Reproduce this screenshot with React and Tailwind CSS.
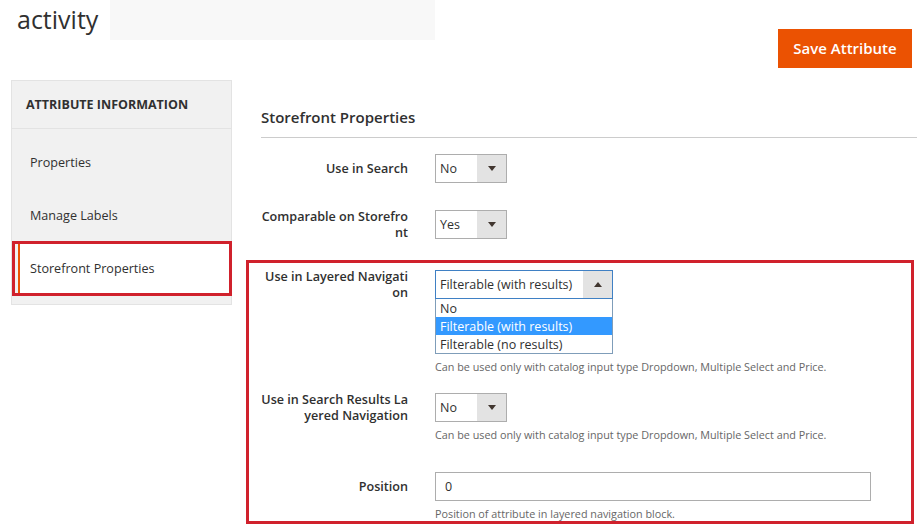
import React from "react";

function Arrow({ up }) {
  return (
    <svg width="8" height="5" viewBox="0 0 8 5">
      {up ? <path d="M0 5h8L4 0z" fill="#41362f" /> : <path d="M0 0h8L4 5z" fill="#41362f" />}
    </svg>
  );
}

function Select({ value, w, open }) {
  return (
    <div
      className={
        "flex h-[29px] border " +
        (open ? "border-[#3f80c4]" : "border-[#adadad]")
      }
      style={{ width: w }}
    >
      <div className="flex-1 flex items-center pl-[4px] pt-[1px] text-[12.5px] text-[#303030] bg-white">{value}</div>
      <div className="w-[29px] bg-[#e3e3e3] flex items-center justify-center">
        <Arrow up={open} />
      </div>
    </div>
  );
}

function Label({ children, w }) {
  return (
    <div
      className="h-[29px] pt-[1px] flex items-center justify-end text-right text-[12.6px] font-semibold leading-[16.5px] text-[#303030] shrink-0"
      style={{ width: w }}
    >
      <div>{children}</div>
    </div>
  );
}

function Note({ children }) {
  return <div className="mt-[6px] text-[10.8px] leading-[14px] text-[#666666]">{children}</div>;
}

export default function App() {
  return (
    <div className="w-[924px] h-[530px] overflow-hidden bg-white text-[#303030] font-['Open_Sans',sans-serif]">
      {/* top */}
      <div className="flex justify-between items-start h-[80px]">
        <div className="flex">
          <div className="w-[110px] h-[40px] pl-[17px] pt-[1px] text-[25px] leading-[36px] text-[#303030]">activity</div>
          <div className="w-[325px] h-[40px] bg-[#f8f8f8]"></div>
        </div>
        <button className="mt-[29px] mr-[12px] w-[134px] h-[39px] bg-[#eb5202] text-white text-[15px] font-semibold">
          Save Attribute
        </button>
      </div>

      <div className="flex items-start">
        {/* sidebar */}
        <div className="ml-[11px] w-[221px] h-[225px] bg-[#f1f1f1] border border-[#e3e3e3]">
          <div className="h-[48px] pt-[1px] border-b border-[#e3e3e3] pl-[14px] flex items-center text-[12.5px] font-bold uppercase text-[#303030]">
            Attribute Information
          </div>
          <div className="pt-[7px]">
            <div className="h-[53px] pt-[2px] flex items-center pl-[18px] text-[12.6px]">Properties</div>
            <div className="h-[53px] pt-[2px] flex items-center pl-[18px] text-[12.6px]">Manage Labels</div>
            <div className="relative ml-[6px] h-[53px] pt-[1px] flex items-center bg-white border-l-[2px] border-[#eb5202] pl-[10px] text-[12.6px]">
              Storefront Properties
              <span className="absolute -left-[8px] -right-px -top-px -bottom-px border-[3px] border-[#d0212c]"></span>
            </div>
          </div>
        </div>

        {/* main */}
        <div className="ml-[14px] w-[671px]">
          <div className="ml-[15px] pt-[27px] pb-[10px] border-b border-[#cccccc] text-[15px] font-semibold leading-[20px]">
            Storefront Properties
          </div>

          <div className="mt-[16px] flex gap-[27px]">
            <Label w={162}>Use in Search</Label>
            <Select value="No" w={72} />
          </div>

          <div className="mt-[27px] flex gap-[27px]">
            <Label w={162}>
              Comparable on Storefro
              <br />
              nt
            </Label>
            <Select value="Yes" w={72} />
          </div>

          <div className="mt-[21px] w-[668px] border-[3px] border-[#d0212c] pt-[7px]">
            <div className="flex gap-[27px]">
              <Label w={159}>
                Use in Layered Navigati
                <br />
                on
              </Label>
              <div>
                <Select value="Filterable (with results)" w={178} open />
                <div className="w-[178px] border-x border-b border-[#7f9db9] text-[12.5px] bg-white">
                  <div className="h-[18px] leading-[19px] pl-[4px]">No</div>
                  <div className="h-[18px] leading-[19px] pl-[4px] bg-[#3399ff] text-white">Filterable (with results)</div>
                  <div className="h-[18px] leading-[19px] pl-[4px]">Filterable (no results)</div>
                </div>
                <Note>Can be used only with catalog input type Dropdown, Multiple Select and Price.</Note>
              </div>
            </div>

            <div className="mt-[19px] flex gap-[27px]">
              <Label w={159}>
                Use in Search Results La
                <br />
                yered Navigation
              </Label>
              <div>
                <Select value="No" w={72} />
                <Note>Can be used only with catalog input type Dropdown, Multiple Select and Price.</Note>
              </div>
            </div>

            <div className="mt-[30px] flex gap-[27px]">
              <Label w={159}>Position</Label>
              <div>
                <div className="w-[436px] h-[29px] pt-[1px] border border-[#adadad] flex items-center pl-[9px] text-[12.5px]">0</div>
                <Note>Position of attribute in layered navigation block.</Note>
              </div>
            </div>
          </div>
        </div>
      </div>
    </div>
  );
}
